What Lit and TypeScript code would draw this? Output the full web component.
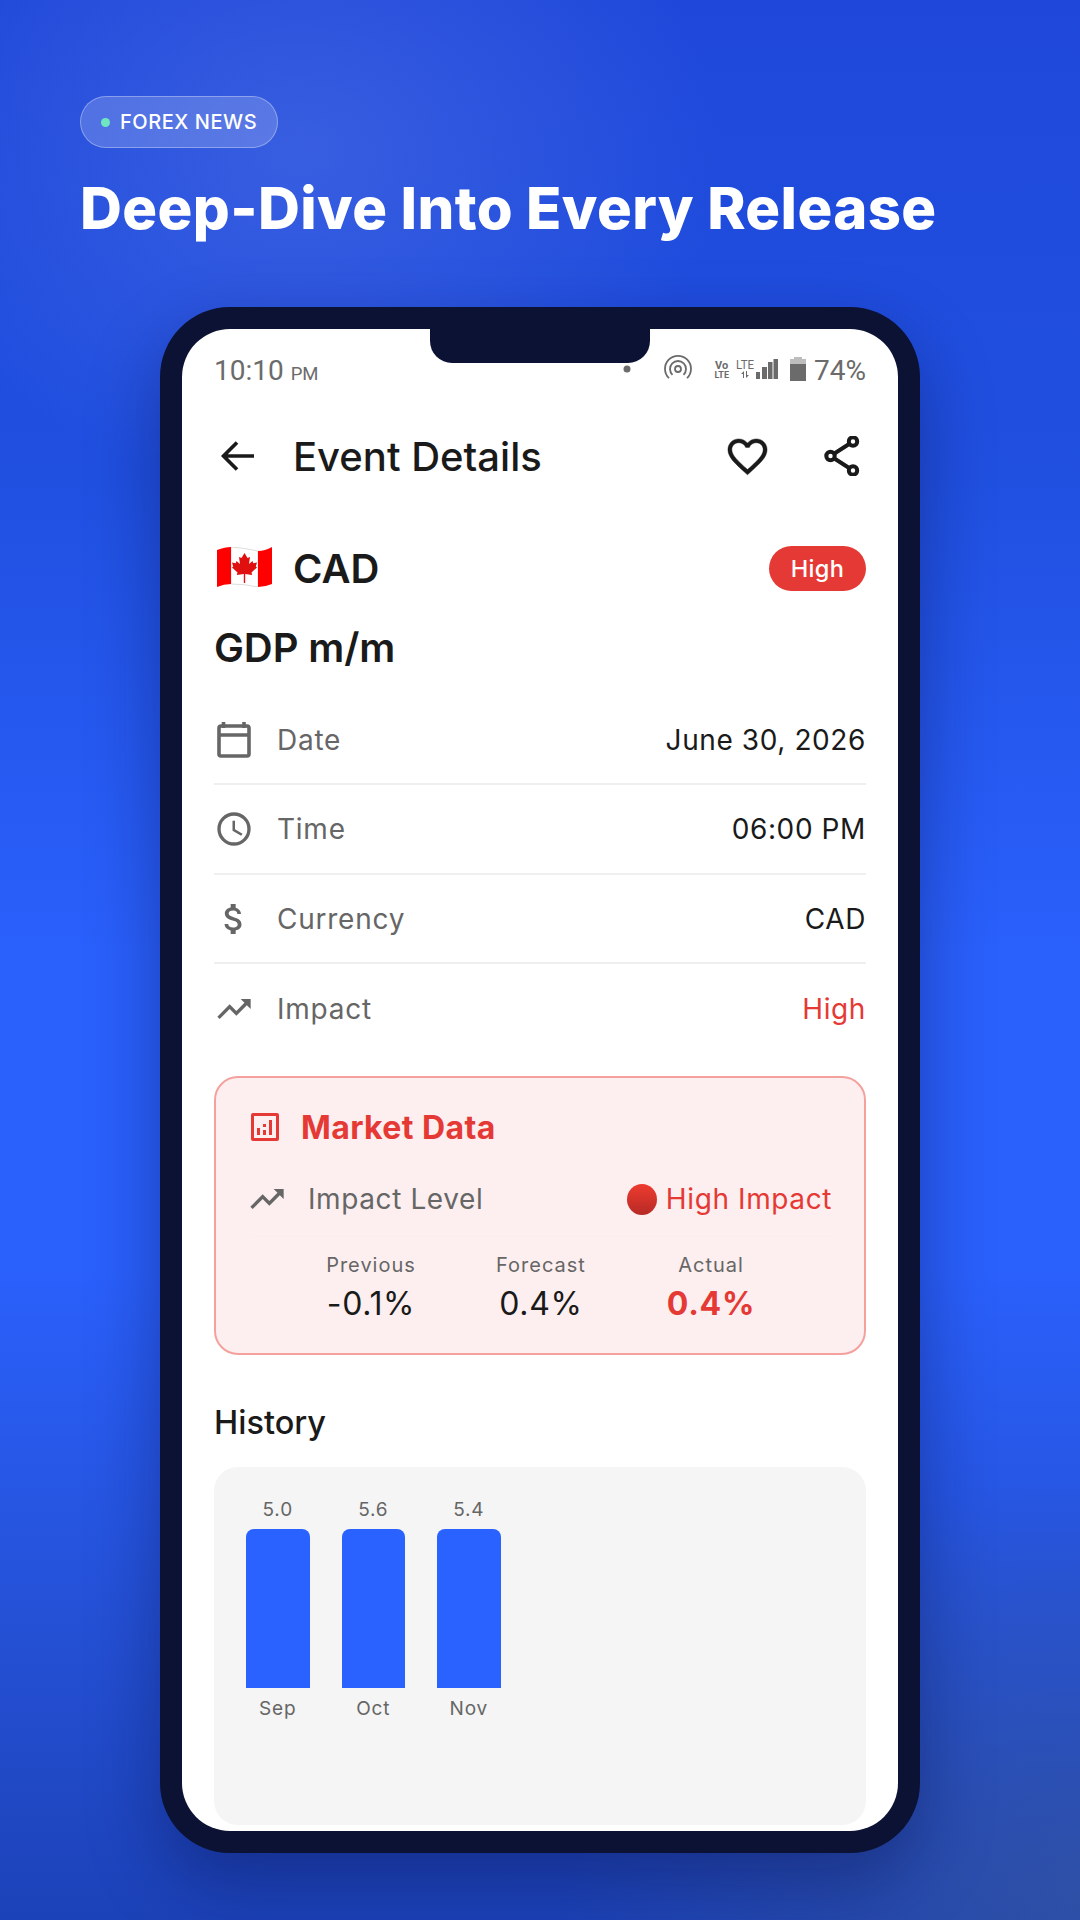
import { LitElement, html, css, svg } from "lit";
import { customElement } from "lit/decorators.js";

const trend = svg`<path d="M16 6l2.29 2.29-4.88 4.88-4-4L2 16.59 3.41 18l6-6 4 4 6.3-6.29L22 12V6z"/>`;

@customElement("app-root")
export class AppRoot extends LitElement {
  static styles = css`
    :host { display: block; width: 1080px; height: 1920px; overflow: hidden; font-family: Inter, "Liberation Sans", sans-serif; color: #1a1a1a;
      background:
        radial-gradient(420px 340px at 300px 150px, rgba(90,120,230,.42), rgba(90,120,230,0) 100%),
        radial-gradient(520px 420px at 1080px 1900px, rgba(60,90,150,.55), rgba(60,90,150,0) 100%),
        linear-gradient(180deg, #1f48da 0%, #2050e0 25%, #2a60fc 50%, #2a60fc 66%, #2450d4 85%, #1c42b8 100%); }
    * { box-sizing: border-box; }
    .hero { padding: 96px 0 0 80px; height: 307px; }
    .pill { display: inline-flex; align-items: center; gap: 10px; height: 52px; width: 198px; padding-left: 20px; border-radius: 26px; border: 1px solid rgba(255,255,255,.32); background: rgba(255,255,255,.18); color: #fff; font-size: 20px; font-weight: 500; letter-spacing: .55px; white-space: nowrap; }
    .dot { width: 9px; height: 9px; border-radius: 50%; background: #6ee7c0; }
    h1 { margin: 24px 0 0; color: #fff; font-size: 58px; line-height: 72px; font-weight: 800; letter-spacing: .4px; white-space: nowrap; }
    .phone { position: relative; margin-left: 160px; width: 760px; height: 1546px; background: #0c1233; border-radius: 70px; padding: 22px; box-shadow: 0 30px 70px rgba(8,16,70,.4); }
    .screen { position: relative; height: 1502px; background: #fff; border-radius: 48px; overflow: hidden; padding: 0 32px; }
    .notch { position: absolute; left: 248px; top: 0; width: 220px; height: 34px; background: #0c1233; border-radius: 0 0 22px 22px; }
    .status { height: 72px; display: flex; align-items: flex-start; justify-content: space-between; padding-top: 22px; color: #6b6b6b; font-family: Roboto, sans-serif; }
    .clock { font-size: 28px; line-height: 40px; }
    .clock small { font-size: 18.5px; }
    .sys { display: flex; align-items: flex-start; gap: 4px; font-size: 28px; line-height: 40px; }
    .sys svg { display: block; }
    .sys text { font-family: Roboto, sans-serif; fill: #6b6b6b; }
    .bar { height: 110px; display: flex; align-items: center; }
    .bar h2 { margin: 0 0 0 37px; flex: 1; font-size: 40px; font-weight: 500; }
    .back { margin-left: 6px; }
    .heart { margin-right: 52px; }
    .share { margin-right: 5px; }
    .cur { display: flex; align-items: center; height: 46px; margin-top: 34px; }
    .cur svg { margin-left: 3px; }
    .cur span.code { flex: 1; margin-left: 21px; font-size: 40px; font-weight: 600; }
    .badge { height: 45px; width: 97px; border-radius: 23px; background: #e53935; color: #fff; display: flex; align-items: center; justify-content: center; font-size: 23.5px; font-weight: 500; letter-spacing: .4px; }
    .name { margin: 34px 0 0; font-size: 40px; font-weight: 600; line-height: 46px; letter-spacing: -.1px; }
    .rows { margin-top: 24.5px; }
    .row { height: 89.5px; padding-top: 1px; display: flex; align-items: center; border-bottom: 2px solid #efefef; font-size: 28px; letter-spacing: .6px; }
    .row:last-child { border-bottom: 0; padding-top: 0; }
    .row .ico { width: 40px; height: 40px; margin-right: 23px; fill: #666; flex: none; }
    .row .lab { flex: 1; color: #666; letter-spacing: .75px; }
    .red { color: #e53935; }
    .card { margin-top: 22.5px; height: 279px; border: 2px solid #f4a19e; background: #fdefef; border-radius: 24px; padding: 0 32px 0 33px; }
    .mh { display: flex; align-items: center; height: 34px; margin-top: 32px; color: #e53935; font-size: 32px; font-weight: 700; letter-spacing: .4px; }
    .mh svg { margin: 0 21px 0 1px; }
    .lvl { display: flex; align-items: center; height: 38px; margin-top: 36px; font-size: 28px; letter-spacing: .6px; }
    .lvl svg { margin: 0 21px 0 -2px; fill: #666; }
    .lvl .lab { flex: 1; color: #666; }
    .ball { width: 30px; height: 31px; border-radius: 50%; background: linear-gradient(#ee3b2f, #b72a26); margin-right: 9px; }
    .rule { height: 1px; background: #fceded; margin-top: 18px; }
    .nums { display: grid; grid-template-columns: repeat(3, 170px); margin: 16px 0 0 37px; text-align: center; }
    .nums .t { color: #666; font-size: 20px; line-height: 24px; letter-spacing: 1px; }
    .nums .v { font-size: 32px; line-height: 40px; margin-top: 7px; letter-spacing: .7px; }
    .nums .v.act { color: #e53935; font-weight: 700; }
    h3 { margin: 49px 0 0; font-size: 32.5px; font-weight: 500; line-height: 38px; }
    .chart { margin-top: 25px; height: 358px; background: #f5f5f5; border-radius: 24px; padding: 31px 0 0 32px; display: flex; gap: 32px; align-items: flex-start; }
    .col { width: 63.5px; display: flex; flex-direction: column; align-items: center; color: #666; font-size: 19px; letter-spacing: .8px; }
    .col .num { line-height: 24px; height: 24px; }
    .col .b { width: 100%; height: 159px; background: #2962ff; border-radius: 8px 8px 0 0; margin-top: 7px; }
    .col .m { line-height: 24px; margin-top: 9px; }
  `;

  private row(icon: unknown, label: string, value: string, red = false) {
    return html`<div class="row">
      <svg class="ico" viewBox="0 0 24 24">${icon}</svg>
      <span class="lab">${label}</span>
      <span class=${red ? "red" : ""}>${value}</span>
    </div>`;
  }

  render() {
    const cal = svg`<g transform="scale(.6)" fill="none" stroke="#666" stroke-width="3.600"><rect x="5" y="6" width="30" height="30" rx="2"/><path d="M5 15h30M9.500 2v6M30 2v6"/></g>`;
    const clock = svg`<path d="M12 2a10 10 0 1 0 0 20 10 10 0 0 0 0-20zm0 18a8 8 0 1 1 0-16 8 8 0 0 1 0 16z"/><path d="M12.600 7h-1.500v6l5.200 3.100.8-1.200-4.500-2.700z"/>`;
    const dollar = svg`<path d="M11.800 10.900c-2.270-.59-3-1.200-3-2.150 0-1.090 1.010-1.850 2.700-1.850 1.780 0 2.440.85 2.500 2.100h2.210c-.07-1.720-1.120-3.300-3.210-3.810V3h-3v2.160c-1.940.42-3.500 1.680-3.500 3.610 0 2.310 1.910 3.460 4.700 4.130 2.500.6 3 1.480 3 2.410 0 .69-.49 1.790-2.700 1.790-2.060 0-2.870-.92-2.980-2.100h-2.200c.12 2.190 1.760 3.420 3.680 3.830V21h3v-2.150c1.950-.37 3.500-1.500 3.500-3.550 0-2.840-2.430-3.810-4.700-4.400z"/>`;
    return html`
      <div class="hero">
        <div class="pill"><span class="dot"></span>FOREX NEWS</div>
        <h1>Deep-Dive Into Every Release</h1>
      </div>
      <div class="phone">
        <div class="screen">
          <div class="notch"></div>
          <div class="status">
            <span class="clock">10:10 <small>PM</small></span>
            <div class="sys">
              <svg width="190" height="40" viewBox="0 0 190 40" fill="#6b6b6b">
                <circle cx="7" cy="18" r="3.500"/>
                <g fill="none" stroke="#6b6b6b" stroke-width="1.800">
                  <circle cx="58" cy="18" r="3"/>
                  <path d="M49 27.200A13 13 0 1 1 67 27.200"/>
                  <path d="M52.500 23.800A8 8 0 1 1 63.500 23.800"/>
                </g>
                <text font-size="11" font-weight="700"><tspan x="95" y="18">Vo</tspan><tspan x="94.500" y="27" font-size="9">LTE</tspan></text>
                <text x="116" y="18" font-size="12" textLength="18" lengthAdjust="spacingAndGlyphs">LTE</text>
                <path d="M121 23l3-3v7h-1v-4zM129 24l-3 3v-7h1v4z"/>
                <rect x="136" y="21" width="4" height="7"/>
                <rect x="142" y="16" width="5" height="12"/>
                <rect x="148" y="11" width="4.500" height="17"/>
                <rect x="153.500" y="8" width="4.500" height="20"/>
                <rect x="174" y="6" width="8" height="3" fill="#bdbdbd"/>
                <rect x="170" y="8" width="16" height="5" fill="#bdbdbd"/>
                <rect x="170" y="13" width="16" height="17"/>
              </svg>
              <span>74%</span>
            </div>
          </div>
          <div class="bar">
            <svg class="back" width="36" height="36" viewBox="0 0 36 36" fill="none" stroke="#1a1a1a" stroke-width="3.600"><path d="M34 18H4M17 4.500L3.500 18 17 31.500"/></svg>
            <h2>Event Details</h2>
            <svg class="heart" width="47" height="47" viewBox="0 0 24 24" fill="#1a1a1a" stroke="#1a1a1a" stroke-width=".2"><path d="M16.500 3c-1.740 0-3.410.81-4.500 2.090C10.910 3.810 9.240 3 7.500 3 4.420 3 2 5.420 2 8.500c0 3.780 3.400 6.860 8.550 11.540L12 21.350l1.450-1.320C18.600 15.360 22 12.280 22 8.500 22 5.420 19.580 3 16.500 3zm-4.400 15.550l-.1.100-.1-.1C7.140 14.240 4 11.390 4 8.500 4 6.500 5.500 5 7.500 5c1.540 0 3.040.99 3.570 2.360h1.870C13.460 5.990 14.960 5 16.500 5c2 0 3.500 1.500 3.500 3.500 0 2.890-3.140 5.740-7.900 10.050z"/></svg>
            <svg class="share" width="38" height="40" viewBox="0 0 38 40" fill="none" stroke="#1a1a1a" stroke-width="4"><circle cx="30" cy="5.500" r="4.200"/><circle cx="30" cy="34.500" r="4.200"/><circle cx="7.500" cy="20" r="4.200"/><path d="M11 17.800L26.500 7.800M11 22.200L26.500 32.200"/></svg>
          </div>
          <div class="cur">
            <svg width="55" height="42" viewBox="0 0 55 42">
              <path d="M14 0Q28 1 41 4V40Q28 37 14 37z" fill="#fff" stroke="#ddd"/>
              <path d="M0 3Q8 0 14 0V37Q7 37 0 40z" fill="#f00"/>
              <path d="M41 4Q48 4 55 0V37Q48 40 41 40z" fill="#f00"/>
              <path d="M27.500 6l3 5 2.500-1-1 7 3.500-3 .8 2.200 3.700-.6-1.200 3.800 1.200 1-5.500 5 .7 2.600-7-1v9h-1.400v-9l-7 1 .7-2.600-5.500-5 1.200-1-1.200-3.800 3.700.6.800-2.200 3.500 3-1-7 2.500 1z" fill="#e01010"/>
            </svg>
            <span class="code">CAD</span>
            <div class="badge">High</div>
          </div>
          <h2 class="name">GDP m/m</h2>
          <div class="rows">
            ${this.row(cal, "Date", "June 30, 2026")}
            ${this.row(clock, "Time", "06:00 PM")}
            ${this.row(dollar, "Currency", "CAD")}
            ${this.row(trend, "Impact", "High", true)}
          </div>
          <div class="card">
            <div class="mh">
              <svg width="30" height="30" viewBox="0 0 30 30" fill="#e53935"><path d="M3 1h24a2 2 0 0 1 2 2v24a2 2 0 0 1-2 2H3a2 2 0 0 1-2-2V3a2 2 0 0 1 2-2zm1 3v22h22V4z"/><rect x="7" y="16" width="3" height="7"/><rect x="13" y="18" width="3" height="5"/><rect x="13" y="12" width="3" height="3"/><rect x="19" y="8" width="3" height="15"/></svg>
              Market Data
            </div>
            <div class="lvl">
              <svg width="40" height="40" viewBox="0 0 24 24">${trend}</svg>
              <span class="lab">Impact Level</span>
              <span class="ball"></span>
              <span class="red">High Impact</span>
            </div>
            <div class="rule"></div>
            <div class="nums">
              <div><div class="t">Previous</div><div class="v">-0.1%</div></div>
              <div><div class="t">Forecast</div><div class="v">0.4%</div></div>
              <div><div class="t">Actual</div><div class="v act">0.4%</div></div>
            </div>
          </div>
          <h3>History</h3>
          <div class="chart">
            ${[["5.0", "Sep"], ["5.6", "Oct"], ["5.4", "Nov"]].map(([n, m]) => html`<div class="col"><span class="num">${n}</span><div class="b"></div><span class="m">${m}</span></div>`)}
          </div>
        </div>
      </div>
    `;
  }
}
